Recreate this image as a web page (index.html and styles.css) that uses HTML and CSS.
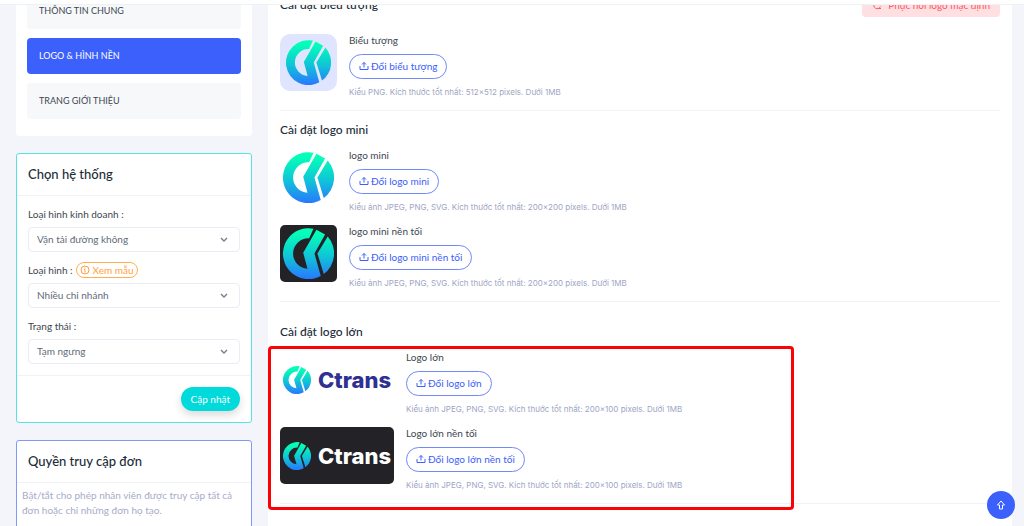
FILE: index.html
```html
<!DOCTYPE html>
<html lang="vi">
  <head>
    <meta charset="utf-8">
    <title>Logo &amp; hình nền</title>
    <link rel="stylesheet" href="styles.css">
  </head>

<body>
  <svg class="sprite" aria-hidden="true">
    <defs>
      <linearGradient id="logo-fill" gradientUnits="userSpaceOnUse" x1="80" y1="0" x2="80" y2="154">
        <stop offset="0.1" stop-color="#04ffb8"/>
        <stop offset="0.55" stop-color="#0fc6d6"/>
        <stop offset="1" stop-color="#2878ff"/>
      </linearGradient>
    </defs>
    <symbol id="logo" viewBox="0 0 154 154">
      <path fill="url(#logo-fill)" d="M92 2A77 77 0 1 0 114 145L95 77L127 20L101 5L61 75L74 123A46 46 0 0 1 79 31Z"/>
      <path fill="url(#logo-fill)" d="M135 26A77 77 0 0 1 123 139L104 77Z"/>
    </symbol>
    <symbol id="upload" viewBox="0 0 20 20">
      <path fill="none" stroke="currentColor" stroke-width="2" d="M10 13V3M6 7l4-4 4 4M2 10v7h16v-7"/>
    </symbol>
  </svg>

  <header class="topbar"></header>

  <div class="layout">
    <aside class="sidebar">
      <nav class="card menu">
        <a href="#" class="menu-item">THÔNG TIN CHUNG</a>
        <a href="#" class="menu-item active">LOGO &amp; HÌNH NỀN</a>
        <a href="#" class="menu-item">TRANG GIỚI THIỆU</a>
      </nav>

      <form class="card card-cyan">
        <h2 class="card-title">Chọn hệ thống</h2>
        <div class="card-body">
          <div class="field">
            <div class="field-label"><label for="business">Loại hình kinh doanh :</label></div>
            <select id="business"><option>Vận tải đường không</option></select>
          </div>
          <div class="field">
            <div class="field-label">
              <label for="type">Loại hình :</label>
              <button type="button" class="sample-button">
                <svg class="icon" viewBox="0 0 20 20"><circle cx="10" cy="10" r="8" fill="none" stroke="currentColor" stroke-width="2"/><path fill="none" stroke="currentColor" stroke-width="2" d="M10 5v2M8 9h2v6"/></svg>
                Xem mẫu
              </button>
            </div>
            <select id="type"><option>Nhiều chi nhánh</option></select>
          </div>
          <div class="field">
            <div class="field-label"><label for="status">Trạng thái :</label></div>
            <select id="status"><option>Tạm ngưng</option></select>
          </div>
        </div>
        <div class="card-footer">
          <button type="button" class="save-button">Cập nhật</button>
        </div>
      </form>

      <section class="card card-blue">
        <h2 class="card-title">Quyền truy cập đơn</h2>
        <p class="card-note">Bật/tắt cho phép nhân viên được truy cập tất cả đơn hoặc chỉ những đơn họ tạo.</p>
      </section>
    </aside>

    <main class="content">
      <section class="group">
        <div class="group-head">
          <h3>Cài đặt biểu tượng</h3>
          <button type="button" class="restore-button">
            <svg class="icon" viewBox="0 0 20 20"><path fill="none" stroke="currentColor" stroke-width="2" d="M16 6a7 7 0 1 0 1 7M17 2v5h-5M13 17h5"/></svg>
            Phục hồi logo mặc định
          </button>
        </div>
        <div class="item">
          <div class="preview preview-icon"><svg class="mark"><use href="#logo"/></svg></div>
          <div class="item-info">
            <p class="item-name">Biểu tượng</p>
            <button type="button" class="upload-button"><svg class="icon"><use href="#upload"/></svg>Đổi biểu tượng</button>
            <p class="hint">Kiểu PNG. Kích thước tốt nhất: 512x512 pixels. Dưới 1MB</p>
          </div>
        </div>
      </section>

      <section class="group">
        <h3>Cài đặt logo mini</h3>
        <div class="item">
          <div class="preview"><svg class="mark"><use href="#logo"/></svg></div>
          <div class="item-info">
            <p class="item-name">logo mini</p>
            <button type="button" class="upload-button"><svg class="icon"><use href="#upload"/></svg>Đổi logo mini</button>
            <p class="hint">Kiểu ảnh JPEG, PNG, SVG. Kích thước tốt nhất: 200x200 pixels. Dưới 1MB</p>
          </div>
        </div>
        <div class="item">
          <div class="preview dark"><svg class="mark"><use href="#logo"/></svg></div>
          <div class="item-info">
            <p class="item-name">logo mini nền tối</p>
            <button type="button" class="upload-button"><svg class="icon"><use href="#upload"/></svg>Đổi logo mini nền tối</button>
            <p class="hint">Kiểu ảnh JPEG, PNG, SVG. Kích thước tốt nhất: 200x200 pixels. Dưới 1MB</p>
          </div>
        </div>
      </section>

      <section class="group group-large">
        <h3>Cài đặt logo lớn</h3>
        <div class="item">
          <div class="preview wide"><svg class="mark"><use href="#logo"/></svg><span>Ctrans</span></div>
          <div class="item-info">
            <p class="item-name">Logo lớn</p>
            <button type="button" class="upload-button"><svg class="icon"><use href="#upload"/></svg>Đổi logo lớn</button>
            <p class="hint">Kiểu ảnh JPEG, PNG, SVG. Kích thước tốt nhất: 200x100 pixels. Dưới 1MB</p>
          </div>
        </div>
        <div class="item">
          <div class="preview wide dark"><svg class="mark"><use href="#logo"/></svg><span>Ctrans</span></div>
          <div class="item-info">
            <p class="item-name">Logo lớn nền tối</p>
            <button type="button" class="upload-button"><svg class="icon"><use href="#upload"/></svg>Đổi logo lớn nền tối</button>
            <p class="hint">Kiểu ảnh JPEG, PNG, SVG. Kích thước tốt nhất: 200x100 pixels. Dưới 1MB</p>
          </div>
        </div>
        <div class="highlight"></div>
      </section>
    </main>
  </div>

  <button type="button" class="to-top" aria-label="Lên đầu trang">
    <svg viewBox="0 0 20 20"><path fill="none" stroke="currentColor" stroke-width="2" d="M10 2l7 8h-4v8H7v-8H3z"/></svg>
  </button>
</body>
</html>
```
FILE: styles.css
```css
* {
  box-sizing: border-box;
}

body {
  margin: 0;
  background-color: #f4f5fa;
  color: #3c4650;
  font-family: Lato, "Open Sans", sans-serif;
  font-size: 10px;
}

h2, h3, p {
  margin: 0;
}

button, select {
  font-family: inherit;
  font-size: 10px;
}

button {
  display: inline-flex;
  align-items: center;
  cursor: pointer;
}

.sprite {
  position: absolute;
  width: 0;
  height: 0;
}

.icon {
  width: 10px;
  height: 10px;
}

.topbar {
  position: fixed;
  top: 0;
  left: 0;
  right: 0;
  height: 5px;
  background-color: white;
  border-bottom: 1px solid #edf2f5;
  z-index: 2;
}

.layout {
  display: grid;
  grid-template-columns: 236px 1fr;
  gap: 16px;
  margin-top: -20px;
  padding: 0 12px 0 16px;
}

.sidebar {
  display: flex;
  flex-direction: column;
  gap: 17px;
}

.card {
  background-color: white;
  border: 1px solid white;
  border-radius: 3px;
}

.card-cyan {
  border-color: #54e2e2;
}

.card-blue {
  flex: 1;
  padding-bottom: 12px;
  border-color: #8197fa;
}

.menu {
  display: flex;
  flex-direction: column;
  gap: 9px;
  padding: 12px 10px 16px;
}

.menu-item {
  height: 36px;
  padding: 0 12px;
  line-height: 36px;
  border-radius: 4px;
  background-color: #f7f8fa;
  color: #3c4650;
  font-size: 9px;
  text-decoration: none;
}

.menu-item.active {
  background-color: #3b60fb;
  color: white;
}

.card-title {
  padding: 0 11px;
  line-height: 41px;
  border-bottom: 1px solid #f1f2f6;
  font-size: 13px;
  font-weight: 500;
  color: #222c38;
}

.card-body {
  display: flex;
  flex-direction: column;
  gap: 10px;
  padding: 10px 11px 11px;
}

.field-label {
  display: flex;
  align-items: center;
  gap: 3px;
  height: 16px;
  margin-bottom: 5px;
}

.sample-button {
  gap: 3px;
  height: 16px;
  padding: 0 3px;
  border: 1px solid #ffb04d;
  border-radius: 8px;
  background-color: white;
  color: #ff9f43;
}

select {
  display: block;
  width: 100%;
  height: 25px;
  padding: 0 8px 2px;
  border: 1px solid #ebecf6;
  border-radius: 4px;
  appearance: none;
  background: white url("data:image/svg+xml,%3Csvg xmlns='http://www.w3.org/2000/svg' viewBox='0 0 8 8'%3E%3Cpath d='M1 2l3 3 3-3' fill='none' stroke='%23777d8c' stroke-width='1.4'/%3E%3C/svg%3E") no-repeat right 11px center / 8px;
  color: #626b78;
}

.card-footer {
  display: flex;
  justify-content: flex-end;
  padding: 11px;
  border-top: 1px solid #f1f2f6;
}

.save-button {
  height: 24px;
  padding: 0 10px;
  border: none;
  border-radius: 12px;
  background-color: #00dada;
  box-shadow: 0 4px 8px rgba(0, 0, 0, 0.15);
  color: white;
}

.card-note {
  padding: 5px;
  line-height: 15px;
  color: #a7acc9;
}

.content {
  padding: 12px;
  background-color: white;
}

.group {
  position: relative;
  padding: 10px 0 11px;
  border-bottom: 1px solid #f1f2f6;
}

.group:first-child {
  padding-top: 0;
}

.group-large {
  margin-top: 11px;
}

h3 {
  margin-bottom: 10px;
  font-size: 12px;
  font-weight: 500;
  line-height: 18px;
  color: #222c38;
}

.group-head {
  display: flex;
  justify-content: space-between;
  align-items: center;
  margin-bottom: 17px;
}

.group-head h3 {
  margin: 0;
}

.restore-button {
  gap: 6px;
  height: 25px;
  padding: 0 10px;
  border: none;
  border-radius: 4px;
  background-color: #ffe0e2;
  color: #ff5560;
}

.item {
  display: flex;
  align-items: flex-start;
  gap: 12px;
}

.item + .item {
  margin-top: 11px;
}

.preview {
  display: flex;
  align-items: center;
  justify-content: center;
  width: 57px;
  height: 57px;
  border-radius: 5px;
}

.mark {
  width: 51px;
  height: 51px;
}

.preview-icon {
  border-radius: 10px;
  background-color: #dfe5ff;
}

.preview-icon .mark {
  width: 45px;
  height: 45px;
}

.wide {
  gap: 7px;
  width: 114px;
  color: #2e3192;
  font-family: Inter, sans-serif;
  font-size: 22px;
  font-weight: 800;
}

.wide .mark {
  width: 28px;
  height: 28px;
}

.dark {
  background-color: #232227;
  color: white;
}

.item-name {
  line-height: 12px;
}

.upload-button {
  gap: 2px;
  height: 25px;
  margin: 8px 0 6px;
  padding: 0 9px 2px;
  border: 1px solid #7189fb;
  border-radius: 13px;
  background-color: white;
  color: #3b60fb;
}

.hint {
  font-family: Inter, sans-serif;
  font-size: 8px;
  line-height: 14px;
  color: #a0a5c4;
}

.highlight {
  position: absolute;
  top: 33px;
  left: -12px;
  width: 526px;
  height: 164px;
  border: 3px solid #fb0207;
  border-radius: 4px;
  pointer-events: none;
}

.to-top {
  position: fixed;
  right: 9px;
  bottom: 7px;
  justify-content: center;
  width: 28px;
  height: 28px;
  padding: 0;
  border: none;
  border-radius: 14px;
  background-color: #3b60fb;
  color: white;
}

.to-top svg {
  width: 10px;
  height: 10px;
}
```
